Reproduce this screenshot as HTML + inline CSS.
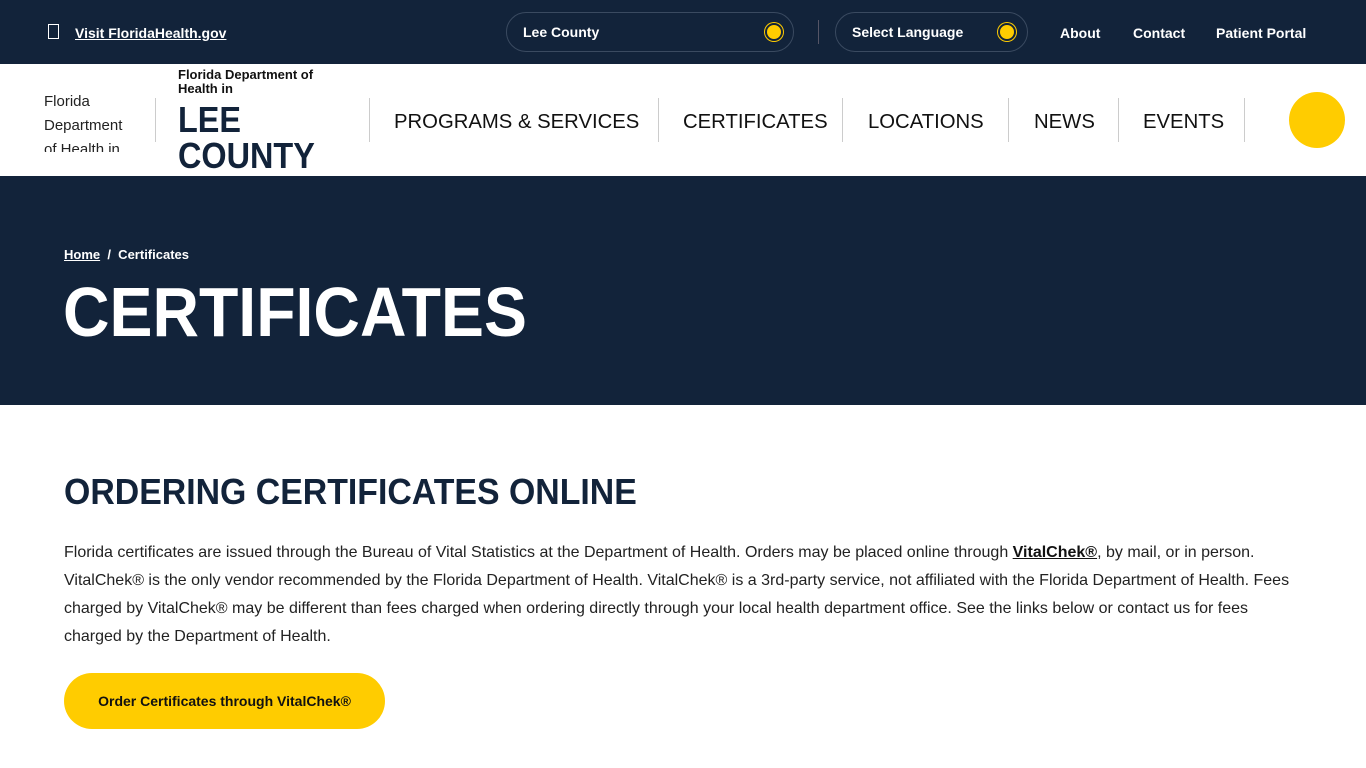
<!DOCTYPE html>
<html><head><meta charset="utf-8"><style>
*{margin:0;padding:0;box-sizing:border-box}
body{width:1366px;height:768px;overflow:hidden;font-family:"Liberation Sans",sans-serif;background:#fff;color:#12233a}
.top{height:64px;background:#12233a;position:relative;color:#fff;font-weight:bold;font-size:14px}
.top>*{position:absolute}
.pill{border:1px solid #3a4a60;border-radius:20px;height:40px;top:12px;padding:0 16px;line-height:38px;font-size:14px}
.dot{position:absolute;width:18px;height:18px;border-radius:50%;background:#ffcc00;top:10px;border:2px solid #12233a;box-shadow:0 0 0 1px #ffcc00}
.hdr{height:112px;position:relative;border-bottom:0}
.hdr>*{position:absolute}
.nav a{position:absolute;top:47px;font-size:20.3px;color:#111;text-decoration:none;white-space:nowrap}
.sep{position:absolute;top:34px;width:1px;height:44px;background:#ccc}
.hero{height:229px;background:#12233a;color:#fff;position:relative}
h1{position:absolute;left:63px;top:270px;font-size:70px;font-weight:bold;transform:scaleX(.92);transform-origin:left;color:#fff;line-height:84px}
p{font-size:16px;line-height:28px;color:#222;width:1240px}
</style></head><body>
<div class="top">
<span style="left:48px;top:24px;width:11px;height:15px;border:1px solid #fff"></span>
<a style="left:75px;top:25px;color:#fff;text-decoration:underline;font-size:14px">Visit FloridaHealth.gov</a>
<div class="pill" style="left:506px;width:288px">Lee County<span class="dot" style="left:258px"></span></div>
<span style="left:818px;top:20px;width:1px;height:24px;background:#556"></span>
<div class="pill" style="left:835px;width:193px">Select Language<span class="dot" style="left:162px"></span></div>
<span style="left:1060px;top:25px">About</span>
<span style="left:1133px;top:25px">Contact</span>
<span style="left:1216px;top:25px">Patient Portal</span>
</div>
<div class="hdr">
<div style="left:44px;top:26px;width:90px;font-size:15px;line-height:24px;color:#222;height:62px;overflow:hidden">Florida Department of Health in</div>
<div class="sep" style="left:155px"></div>
<div style="left:178px;top:4px;font-size:13px;font-weight:bold;line-height:14px;color:#111;width:160px">Florida Department of Health in</div>
<div style="left:178px;top:38px;font-size:36px;font-weight:bold;line-height:36px;transform:scaleX(.9);transform-origin:left">LEE<br>COUNTY</div>
<div class="nav">
<div class="sep" style="left:369px"></div><a style="left:394px">PROGRAMS &amp; SERVICES</a>
<div class="sep" style="left:658px"></div><a style="left:683px">CERTIFICATES</a>
<div class="sep" style="left:842px"></div><a style="left:868px">LOCATIONS</a>
<div class="sep" style="left:1008px"></div><a style="left:1034px">NEWS</a>
<div class="sep" style="left:1118px"></div><a style="left:1143px">EVENTS</a>
<div class="sep" style="left:1244px"></div>
</div>
<div style="left:1289px;top:28px;width:56px;height:56px;border-radius:50%;background:#ffcc00"></div>
</div>
<div class="hero">
<div style="position:absolute;left:64px;top:71px;font-size:13px;font-weight:bold"><u>Home</u> &nbsp;/&nbsp; Certificates</div>
</div>
<h1>CERTIFICATES</h1>
<div style="position:absolute;left:64px;top:471px">
<h2 style="font-size:36px;font-weight:bold;transform:scaleX(.94);transform-origin:left;white-space:nowrap;margin-bottom:26px">ORDERING CERTIFICATES ONLINE</h2>
<p>Florida certificates are issued through the Bureau of Vital Statistics at the Department of Health. Orders may be placed online through <b style="color:#111;text-decoration:underline">VitalChek®</b>, by mail, or in person. VitalChek® is the only vendor recommended by the Florida Department of Health. VitalChek® is a 3rd-party service, not affiliated with the Florida Department of Health. Fees charged by VitalChek® may be different than fees charged when ordering directly through your local health department office. See the links below or contact us for fees charged by the Department of Health.</p>
<div style="margin-top:22px;width:321px;height:56px;border-radius:28px;background:#ffcc00;color:#111;font-weight:bold;font-size:14px;line-height:56px;text-align:center">Order Certificates through VitalChek®</div>
</div>
</body></html>
